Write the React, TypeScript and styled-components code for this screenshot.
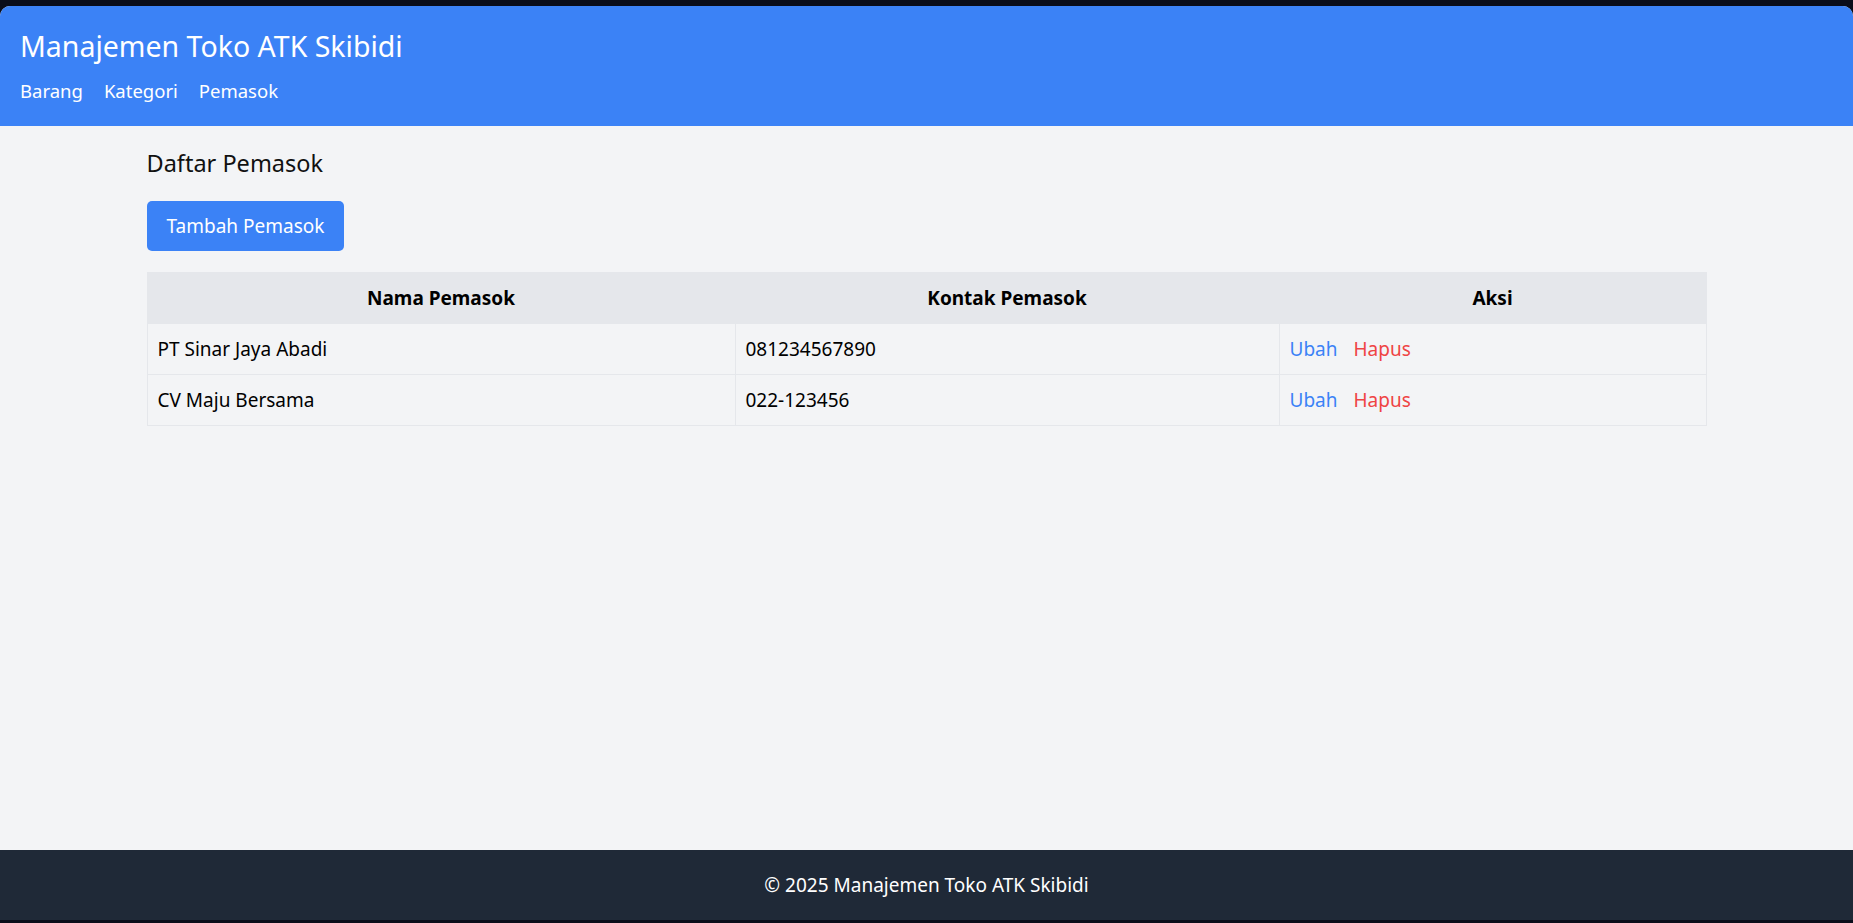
import { createGlobalStyle, styled } from "styled-components";

const GlobalStyle = createGlobalStyle`
    * { box-sizing: border-box; }
    html, body {
        margin: 0;
        padding: 0;
        background: #0a0d1a;
    }
    body {
        font-family: "Noto Sans", "Open Sans", sans-serif;
        font-size: 19px;
        line-height: 30px;
        color: #000;
    }
`;

const Frame = styled.div`
    padding-top: 6px;
    padding-bottom: 3px;
    height: 923px;
`;

const Page = styled.div`
    height: 100%;
    display: flex;
    flex-direction: column;
    background: #f3f4f6;
    border-radius: 10px 10px 0 0;
    overflow: hidden;
`;

const Header = styled.header`
    background: #3b82f6;
    color: white;
    padding: 20px;
`;

const Brand = styled.h1`
    margin: 0 0 10px;
    font-size: 28.5px;
    line-height: 40px;
    font-weight: 400;
`;

const Nav = styled.nav`
    display: flex;
    gap: 21px;
`;

const NavLink = styled.a`
    color: white;
    text-decoration: none;
    font-size: 18.5px;
    line-height: 30px;
    cursor: pointer;
`;

const Main = styled.main`
    flex: 1;
    width: 100%;
    max-width: 1600px;
    margin: 0 auto;
    padding: 20px 20px;
`;

const Title = styled.h2`
    margin: 0 0 20px;
    font-size: 23.5px;
    line-height: 35px;
    font-weight: 400;
    color: #111;
`;

const AddButton = styled.button`
    display: block;
    background: #3b82f6;
    color: white;
    border: none;
    border-radius: 5px;
    padding: 10px 20px;
    font-family: inherit;
    font-size: 19px;
    line-height: 30px;
    cursor: pointer;
    margin-bottom: 21px;
    &:hover { opacity: .9; }
`;

const Table = styled.table`
    width: 100%;
    border-collapse: collapse;
    table-layout: fixed;
`;

const HeadRow = styled.tr`
    background: #e5e7eb;
`;

const Th = styled.th`
    border: 1px solid #e5e7eb;
    padding: 10px;
    font-weight: 700;
    text-align: center;
`;

const Td = styled.td`
    border: 1px solid #e5e7eb;
    padding: 10px;
    text-align: left;
`;

const Actions = styled.div`
    display: flex;
    gap: 16px;
`;

const ActionLink = styled.a<{ $tone: "edit" | "delete" }>`
    color: ${(p) => (p.$tone === "edit" ? "#3b82f6" : "#ef4444")};
    text-decoration: none;
    cursor: pointer;
`;

const Footer = styled.footer`
    background: #1f2937;
    color: white;
    text-align: center;
    padding: 20px;
`;

const suppliers = [
    { name: "PT Sinar Jaya Abadi", contact: "081234567890" },
    { name: "CV Maju Bersama", contact: "022-123456" },
];

export default function App() {
    return (
        <>
            <GlobalStyle />
            <Frame>
                <Page>
                    <Header>
                        <Brand>Manajemen Toko ATK Skibidi</Brand>
                        <Nav>
                            <NavLink>Barang</NavLink>
                            <NavLink>Kategori</NavLink>
                            <NavLink>Pemasok</NavLink>
                        </Nav>
                    </Header>
                    <Main>
                        <Title>Daftar Pemasok</Title>
                        <AddButton>Tambah Pemasok</AddButton>
                        <Table>
                            <colgroup>
                                <col style={{ width: "588px" }} />
                                <col style={{ width: "544px" }} />
                                <col />
                            </colgroup>
                            <thead>
                                <HeadRow>
                                    <Th>Nama Pemasok</Th>
                                    <Th>Kontak Pemasok</Th>
                                    <Th>Aksi</Th>
                                </HeadRow>
                            </thead>
                            <tbody>
                                {suppliers.map((s) => (
                                    <tr key={s.name}>
                                        <Td>{s.name}</Td>
                                        <Td>{s.contact}</Td>
                                        <Td>
                                            <Actions>
                                                <ActionLink $tone="edit">Ubah</ActionLink>
                                                <ActionLink $tone="delete">Hapus</ActionLink>
                                            </Actions>
                                        </Td>
                                    </tr>
                                ))}
                            </tbody>
                        </Table>
                    </Main>
                    <Footer>© 2025 Manajemen Toko ATK Skibidi</Footer>
                </Page>
            </Frame>
        </>
    );
}
